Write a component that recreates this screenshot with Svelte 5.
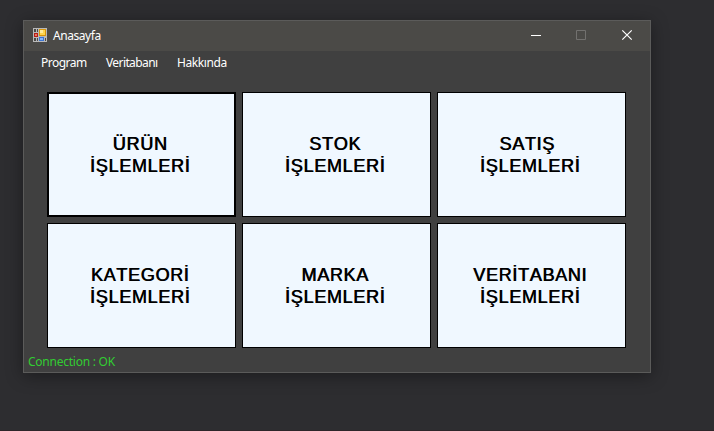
<script>
  const tiles = [
    { first: 'ÜRÜN', focused: true },
    { first: 'STOK' },
    { first: 'SATIŞ', trailing: true },
    { first: 'KATEGORİ' },
    { first: 'MARKA' },
    { first: 'VERİTABANI' }
  ];
</script>

<div class="desktop">
  <main class="window">
    <header>
      <svg class="logo" width="14" height="14" viewBox="0 0 14 14" shape-rendering="crispEdges">
        <path fill="#b9b9b9" d="M0 0h14v14H0z" />
        <path fill="#4b4a47" d="M1 1h2v3H1zM4 1h1v3H4zM1 10h2v3H1zM4 10h1v3H4zM12 10h1v3h-1z" />
        <path fill="#b51e16" d="M1 5h4v4H1z" />
        <path fill="#e87867" d="M2 6h2v2H2z" />
        <path fill="#d6950c" d="M6 1h7v7H6z" />
        <path fill="#ffd54d" d="M7 2h5v5H7z" />
        <path fill="#ffeb9b" d="M7 2h3v3H7z" />
        <path fill="#3b74d1" d="M6 9h5v4H6z" />
        <path fill="#83b6ff" d="M7 10h3v2H7z" />
      </svg>
      <span class="title">Anasayfa</span>
      <div class="controls">
        <svg width="46" height="30"><path d="M18 14.5h10" stroke="#fff" /></svg>
        <svg width="46" height="30"><path d="M17.5 9.5h9v9h-9z" stroke="#72716f" fill="none" /></svg>
        <svg width="45" height="30"><path d="M17.3 9.3l9.4 9.4M26.7 9.3l-9.4 9.4" stroke="#fff" stroke-width="1.2" /></svg>
      </div>
    </header>
    <nav><span class="program">Program</span><span class="database">Veritabanı</span><span>Hakkında</span></nav>
    <section>
      {#each tiles as tile}
        <button class:focused={tile.focused}>
          <span class:trailing={tile.trailing}>{tile.first}</span><span>İŞLEMLERİ</span>
        </button>
      {/each}
    </section>
    <footer>Connection : OK</footer>
  </main>
</div>

<style>
  .desktop {
    box-sizing: border-box;
    width: 714px;
    height: 431px;
    padding: 20px 0 0 23px;
    overflow: hidden;
    background: #2d2d30;
    border-bottom: 1px solid #2d2629;
    font-family: "Noto Sans", sans-serif;
    font-size: 12px;
  }
  .window {
    box-sizing: border-box;
    display: flex;
    flex-direction: column;
    width: 628px;
    height: 353px;
    border: 1px solid #5b5b5a;
    background: #404040;
    box-shadow: 0 3px 16px rgba(0, 0, 0, 0.38);
  }
  header {
    display: flex;
    height: 30px;
    padding-left: 9px;
    background: #4b4a47;
    color: #fff;
  }
  .logo { margin-top: 7px; }
  .title { margin-left: 6px; line-height: 30px; letter-spacing: -0.45px; }
  .controls { display: flex; margin-left: auto; }
  nav {
    display: flex;
    height: 24px;
    padding-left: 17px;
    color: #fff;
    line-height: 24px;
    letter-spacing: -0.4px;
  }
  .program { width: 65px; letter-spacing: -0.5px; }
  .database { width: 71px; letter-spacing: -0.6px; }
  section {
    display: grid;
    grid-template-columns: repeat(3, 189px);
    grid-auto-rows: 125px;
    gap: 6px;
    padding: 17px 0 0 23px;
  }
  button {
    display: flex;
    flex-direction: column;
    align-items: center;
    justify-content: center;
    margin: 0;
    padding: 0 3px 0 0;
    border: 1px solid #000;
    border-radius: 0;
    background: #f0f8ff;
    color: #000;
    font: 18px/22px "Liberation Sans", Arial, sans-serif;
    font-kerning: none;
    letter-spacing: 0.7px;
    text-shadow: 0.7px 0 #000;
  }
  .focused { border-width: 2px; }
  .trailing { padding-right: 6px; }
  footer {
    padding-left: 4px;
    color: #32cd32;
    line-height: 17px;
    letter-spacing: -0.25px;
    margin-top: 5px;
  }
</style>
